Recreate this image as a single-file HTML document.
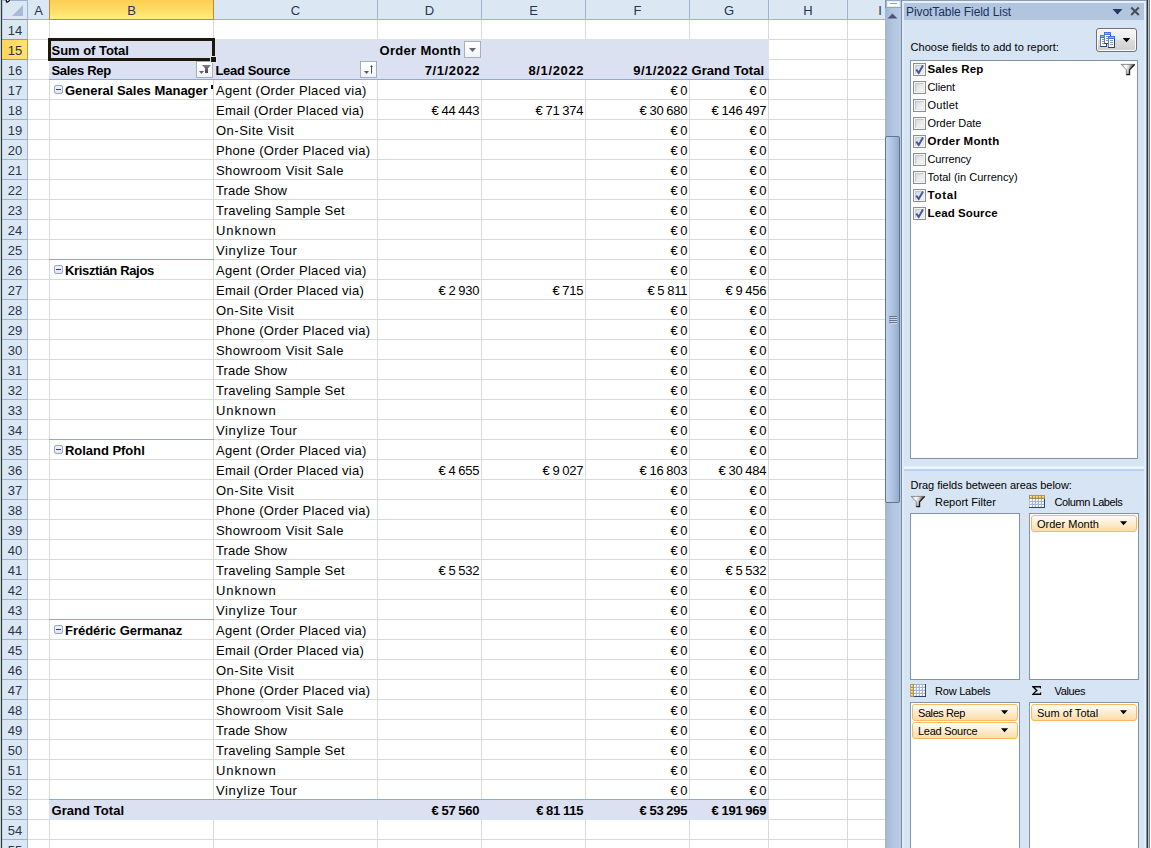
<!DOCTYPE html>
<html><head><meta charset="utf-8"><title>PivotTable</title>
<style>
html,body{margin:0;padding:0}
body{width:1151px;height:848px;position:relative;overflow:hidden;background:#fff;font-family:"Liberation Sans",sans-serif}
div,svg,span{box-sizing:border-box}
.a{position:absolute}
.t{position:absolute;white-space:pre;overflow:visible;height:20px;line-height:20px;color:#000}
.c{font-size:13.0px}
.cb{font-size:13.0px;font-weight:bold}
.n{font-size:13.0px}
.nb{font-size:13.0px;font-weight:bold}
.h{font-size:13.0px;color:#27364e}
.p{font-size:11px;height:14px;line-height:14px}
.pb{font-size:11.5px;font-weight:bold;height:14px;line-height:14px}
.pt{font-size:12px;height:16px;line-height:16px;color:#17305f}
.hl{position:absolute;height:1px}
.vl{position:absolute;width:1px}
.btn{position:absolute;width:17px;height:17px;border:1px solid #a9afb9;background:linear-gradient(#ffffff,#f1f3f8)}
.col{position:absolute;width:9px;height:9px;border:1px solid #93a6cc;border-radius:2px;background:linear-gradient(#f1f1f1,#e7e7e7)}
.col i{position:absolute;left:1px;top:3px;width:5px;height:1px;background:#2e4080}
.chk{position:absolute;width:13px;height:13px;border:1px solid #8e8f8f;background:#f4f4f4}
.chk b{position:absolute;box-sizing:border-box;left:1px;top:1px;width:9px;height:9px;border:1px solid #e2e4e8;border-color:#c4c8ce #e9e9ea #e9e9ea #c4c8ce;background:linear-gradient(135deg,#d3d7dd 0%,#e6e8eb 45%,#f7f7f7 100%)}
.box{position:absolute;background:#fff;border:1px solid #8293ab}
.item{position:absolute;height:17px;border:1px solid #fab863;border-radius:3px;background:linear-gradient(#fffdf7 0%,#fef0d6 40%,#fbdda8 100%)}
</style></head><body>

<div class="hl" style="left:28px;top:39px;width:857px;background:#d8d9db"></div>
<div class="hl" style="left:28px;top:59px;width:857px;background:#d8d9db"></div>
<div class="hl" style="left:28px;top:79px;width:857px;background:#d8d9db"></div>
<div class="hl" style="left:28px;top:99px;width:857px;background:#d8d9db"></div>
<div class="hl" style="left:28px;top:119px;width:857px;background:#d8d9db"></div>
<div class="hl" style="left:28px;top:139px;width:857px;background:#d8d9db"></div>
<div class="hl" style="left:28px;top:159px;width:857px;background:#d8d9db"></div>
<div class="hl" style="left:28px;top:179px;width:857px;background:#d8d9db"></div>
<div class="hl" style="left:28px;top:199px;width:857px;background:#d8d9db"></div>
<div class="hl" style="left:28px;top:219px;width:857px;background:#d8d9db"></div>
<div class="hl" style="left:28px;top:239px;width:857px;background:#d8d9db"></div>
<div class="hl" style="left:28px;top:259px;width:857px;background:#d8d9db"></div>
<div class="hl" style="left:28px;top:279px;width:857px;background:#d8d9db"></div>
<div class="hl" style="left:28px;top:299px;width:857px;background:#d8d9db"></div>
<div class="hl" style="left:28px;top:319px;width:857px;background:#d8d9db"></div>
<div class="hl" style="left:28px;top:339px;width:857px;background:#d8d9db"></div>
<div class="hl" style="left:28px;top:359px;width:857px;background:#d8d9db"></div>
<div class="hl" style="left:28px;top:379px;width:857px;background:#d8d9db"></div>
<div class="hl" style="left:28px;top:399px;width:857px;background:#d8d9db"></div>
<div class="hl" style="left:28px;top:419px;width:857px;background:#d8d9db"></div>
<div class="hl" style="left:28px;top:439px;width:857px;background:#d8d9db"></div>
<div class="hl" style="left:28px;top:459px;width:857px;background:#d8d9db"></div>
<div class="hl" style="left:28px;top:479px;width:857px;background:#d8d9db"></div>
<div class="hl" style="left:28px;top:499px;width:857px;background:#d8d9db"></div>
<div class="hl" style="left:28px;top:519px;width:857px;background:#d8d9db"></div>
<div class="hl" style="left:28px;top:539px;width:857px;background:#d8d9db"></div>
<div class="hl" style="left:28px;top:559px;width:857px;background:#d8d9db"></div>
<div class="hl" style="left:28px;top:579px;width:857px;background:#d8d9db"></div>
<div class="hl" style="left:28px;top:599px;width:857px;background:#d8d9db"></div>
<div class="hl" style="left:28px;top:619px;width:857px;background:#d8d9db"></div>
<div class="hl" style="left:28px;top:639px;width:857px;background:#d8d9db"></div>
<div class="hl" style="left:28px;top:659px;width:857px;background:#d8d9db"></div>
<div class="hl" style="left:28px;top:679px;width:857px;background:#d8d9db"></div>
<div class="hl" style="left:28px;top:699px;width:857px;background:#d8d9db"></div>
<div class="hl" style="left:28px;top:719px;width:857px;background:#d8d9db"></div>
<div class="hl" style="left:28px;top:739px;width:857px;background:#d8d9db"></div>
<div class="hl" style="left:28px;top:759px;width:857px;background:#d8d9db"></div>
<div class="hl" style="left:28px;top:779px;width:857px;background:#d8d9db"></div>
<div class="hl" style="left:28px;top:799px;width:857px;background:#d8d9db"></div>
<div class="hl" style="left:28px;top:819px;width:857px;background:#d8d9db"></div>
<div class="hl" style="left:28px;top:839px;width:857px;background:#d8d9db"></div>
<div class="vl" style="left:49px;top:20px;height:828px;background:#d8d9db"></div>
<div class="vl" style="left:213px;top:20px;height:828px;background:#d8d9db"></div>
<div class="vl" style="left:377px;top:20px;height:828px;background:#d8d9db"></div>
<div class="vl" style="left:481px;top:20px;height:828px;background:#d8d9db"></div>
<div class="vl" style="left:585px;top:20px;height:828px;background:#d8d9db"></div>
<div class="vl" style="left:689px;top:20px;height:828px;background:#d8d9db"></div>
<div class="vl" style="left:768px;top:20px;height:828px;background:#d8d9db"></div>
<div class="vl" style="left:847px;top:20px;height:828px;background:#d8d9db"></div>
<div class="a" style="left:49px;top:39px;width:720px;height:40px;background:#dce1f1"></div>
<div class="hl" style="left:49px;top:79px;width:720px;background:#8daadc"></div>
<div class="a" style="left:49px;top:800px;width:720px;height:20px;background:#dce1f1"></div>
<div class="hl" style="left:49px;top:799px;width:720px;background:#8daadc"></div>
<div class="hl" style="left:49px;top:259px;width:165px;background:#8daadc"></div>
<div class="hl" style="left:49px;top:439px;width:165px;background:#8daadc"></div>
<div class="hl" style="left:49px;top:619px;width:165px;background:#8daadc"></div>
<div class="a" style="left:2px;top:0;width:883px;height:20px;background:#dce7f4;border-bottom:1px solid #9fb3d1"></div>
<div class="a" style="left:2px;top:0;width:26px;height:20px;border-top:1px solid #9db0cf;border-right:1px solid #9fb3d1;border-left:1px solid #b4c8e4;border-bottom:1px solid #c8933a"></div>
<svg class="a" style="left:12px;top:5px" width="12" height="11"><path d="M11 0 L11 11 L0 11 Z" fill="#a9bad8"/></svg>
<svg class="a" style="left:4px;top:0" width="8" height="4"><path d="M1.6 0 L2 2.2 Q2.6 3.2 4 2.6 L5.6 1.2 L6 0 Z" fill="#0b0b1a"/><path d="M3 0 L3.2 1.4 L4.6 0.4 L4.8 0 Z" fill="#fff"/></svg>
<div class="vl" style="left:27px;top:0;height:19px;background:#9fb3d1"></div>
<div class="vl" style="left:377px;top:0;height:19px;background:#9fb3d1"></div>
<div class="vl" style="left:481px;top:0;height:19px;background:#9fb3d1"></div>
<div class="vl" style="left:585px;top:0;height:19px;background:#9fb3d1"></div>
<div class="vl" style="left:689px;top:0;height:19px;background:#9fb3d1"></div>
<div class="vl" style="left:768px;top:0;height:19px;background:#9fb3d1"></div>
<div class="vl" style="left:847px;top:0;height:19px;background:#9fb3d1"></div>
<div class="a" style="left:49px;top:0;width:165px;height:20px;background:linear-gradient(#fcce54 0%,#fedb66 50%,#fff07c 100%);border:1px solid #c18b2d;border-top:none"></div>
<div class="t h" style="left:28px;top:1px;width:21px;text-align:center;"><span id="t1" style="">A</span></div>
<div class="t h" style="left:50px;top:1px;width:163px;text-align:center;"><span id="t2" style="">B</span></div>
<div class="t h" style="left:214px;top:1px;width:163px;text-align:center;"><span id="t3" style="">C</span></div>
<div class="t h" style="left:378px;top:1px;width:103px;text-align:center;"><span id="t4" style="">D</span></div>
<div class="t h" style="left:482px;top:1px;width:103px;text-align:center;"><span id="t5" style="">E</span></div>
<div class="t h" style="left:586px;top:1px;width:103px;text-align:center;"><span id="t6" style="">F</span></div>
<div class="t h" style="left:690px;top:1px;width:78px;text-align:center;"><span id="t7" style="">G</span></div>
<div class="t h" style="left:769px;top:1px;width:78px;text-align:center;"><span id="t8" style="">H</span></div>
<div class="t h" style="left:876px;top:1px;width:8px;text-align:center;"><span id="t9" style="">I</span></div>
<div class="a" style="left:2px;top:20px;width:26px;height:828px;background:#dce7f4;border-right:1px solid #9fb3d1;border-left:1px solid #c3d4ea"></div>
<div class="hl" style="left:2px;top:39px;width:26px;background:#9fb3d1"></div>
<div class="hl" style="left:2px;top:59px;width:26px;background:#9fb3d1"></div>
<div class="hl" style="left:2px;top:79px;width:26px;background:#9fb3d1"></div>
<div class="hl" style="left:2px;top:99px;width:26px;background:#9fb3d1"></div>
<div class="hl" style="left:2px;top:119px;width:26px;background:#9fb3d1"></div>
<div class="hl" style="left:2px;top:139px;width:26px;background:#9fb3d1"></div>
<div class="hl" style="left:2px;top:159px;width:26px;background:#9fb3d1"></div>
<div class="hl" style="left:2px;top:179px;width:26px;background:#9fb3d1"></div>
<div class="hl" style="left:2px;top:199px;width:26px;background:#9fb3d1"></div>
<div class="hl" style="left:2px;top:219px;width:26px;background:#9fb3d1"></div>
<div class="hl" style="left:2px;top:239px;width:26px;background:#9fb3d1"></div>
<div class="hl" style="left:2px;top:259px;width:26px;background:#9fb3d1"></div>
<div class="hl" style="left:2px;top:279px;width:26px;background:#9fb3d1"></div>
<div class="hl" style="left:2px;top:299px;width:26px;background:#9fb3d1"></div>
<div class="hl" style="left:2px;top:319px;width:26px;background:#9fb3d1"></div>
<div class="hl" style="left:2px;top:339px;width:26px;background:#9fb3d1"></div>
<div class="hl" style="left:2px;top:359px;width:26px;background:#9fb3d1"></div>
<div class="hl" style="left:2px;top:379px;width:26px;background:#9fb3d1"></div>
<div class="hl" style="left:2px;top:399px;width:26px;background:#9fb3d1"></div>
<div class="hl" style="left:2px;top:419px;width:26px;background:#9fb3d1"></div>
<div class="hl" style="left:2px;top:439px;width:26px;background:#9fb3d1"></div>
<div class="hl" style="left:2px;top:459px;width:26px;background:#9fb3d1"></div>
<div class="hl" style="left:2px;top:479px;width:26px;background:#9fb3d1"></div>
<div class="hl" style="left:2px;top:499px;width:26px;background:#9fb3d1"></div>
<div class="hl" style="left:2px;top:519px;width:26px;background:#9fb3d1"></div>
<div class="hl" style="left:2px;top:539px;width:26px;background:#9fb3d1"></div>
<div class="hl" style="left:2px;top:559px;width:26px;background:#9fb3d1"></div>
<div class="hl" style="left:2px;top:579px;width:26px;background:#9fb3d1"></div>
<div class="hl" style="left:2px;top:599px;width:26px;background:#9fb3d1"></div>
<div class="hl" style="left:2px;top:619px;width:26px;background:#9fb3d1"></div>
<div class="hl" style="left:2px;top:639px;width:26px;background:#9fb3d1"></div>
<div class="hl" style="left:2px;top:659px;width:26px;background:#9fb3d1"></div>
<div class="hl" style="left:2px;top:679px;width:26px;background:#9fb3d1"></div>
<div class="hl" style="left:2px;top:699px;width:26px;background:#9fb3d1"></div>
<div class="hl" style="left:2px;top:719px;width:26px;background:#9fb3d1"></div>
<div class="hl" style="left:2px;top:739px;width:26px;background:#9fb3d1"></div>
<div class="hl" style="left:2px;top:759px;width:26px;background:#9fb3d1"></div>
<div class="hl" style="left:2px;top:779px;width:26px;background:#9fb3d1"></div>
<div class="hl" style="left:2px;top:799px;width:26px;background:#9fb3d1"></div>
<div class="hl" style="left:2px;top:819px;width:26px;background:#9fb3d1"></div>
<div class="hl" style="left:2px;top:839px;width:26px;background:#9fb3d1"></div>
<div class="hl" style="left:2px;top:859px;width:26px;background:#9fb3d1"></div>
<div class="a" style="left:2px;top:39px;width:26px;height:21px;background:linear-gradient(90deg,#fdd45c,#ffe372);border-top:1px solid #c8933a;border-bottom:1px solid #c8933a;border-right:1px solid #c8933a"></div>
<div class="t h" style="left:2px;top:21px;width:26px;text-align:center;"><span id="t10" style="">14</span></div>
<div class="t h" style="left:2px;top:41px;width:26px;text-align:center;"><span id="t11" style="">15</span></div>
<div class="t h" style="left:2px;top:61px;width:26px;text-align:center;"><span id="t12" style="">16</span></div>
<div class="t h" style="left:2px;top:81px;width:26px;text-align:center;"><span id="t13" style="">17</span></div>
<div class="t h" style="left:2px;top:101px;width:26px;text-align:center;"><span id="t14" style="">18</span></div>
<div class="t h" style="left:2px;top:121px;width:26px;text-align:center;"><span id="t15" style="">19</span></div>
<div class="t h" style="left:2px;top:141px;width:26px;text-align:center;"><span id="t16" style="">20</span></div>
<div class="t h" style="left:2px;top:161px;width:26px;text-align:center;"><span id="t17" style="">21</span></div>
<div class="t h" style="left:2px;top:181px;width:26px;text-align:center;"><span id="t18" style="">22</span></div>
<div class="t h" style="left:2px;top:201px;width:26px;text-align:center;"><span id="t19" style="">23</span></div>
<div class="t h" style="left:2px;top:221px;width:26px;text-align:center;"><span id="t20" style="">24</span></div>
<div class="t h" style="left:2px;top:241px;width:26px;text-align:center;"><span id="t21" style="">25</span></div>
<div class="t h" style="left:2px;top:261px;width:26px;text-align:center;"><span id="t22" style="">26</span></div>
<div class="t h" style="left:2px;top:281px;width:26px;text-align:center;"><span id="t23" style="">27</span></div>
<div class="t h" style="left:2px;top:301px;width:26px;text-align:center;"><span id="t24" style="">28</span></div>
<div class="t h" style="left:2px;top:321px;width:26px;text-align:center;"><span id="t25" style="">29</span></div>
<div class="t h" style="left:2px;top:341px;width:26px;text-align:center;"><span id="t26" style="">30</span></div>
<div class="t h" style="left:2px;top:361px;width:26px;text-align:center;"><span id="t27" style="">31</span></div>
<div class="t h" style="left:2px;top:381px;width:26px;text-align:center;"><span id="t28" style="">32</span></div>
<div class="t h" style="left:2px;top:401px;width:26px;text-align:center;"><span id="t29" style="">33</span></div>
<div class="t h" style="left:2px;top:421px;width:26px;text-align:center;"><span id="t30" style="">34</span></div>
<div class="t h" style="left:2px;top:441px;width:26px;text-align:center;"><span id="t31" style="">35</span></div>
<div class="t h" style="left:2px;top:461px;width:26px;text-align:center;"><span id="t32" style="">36</span></div>
<div class="t h" style="left:2px;top:481px;width:26px;text-align:center;"><span id="t33" style="">37</span></div>
<div class="t h" style="left:2px;top:501px;width:26px;text-align:center;"><span id="t34" style="">38</span></div>
<div class="t h" style="left:2px;top:521px;width:26px;text-align:center;"><span id="t35" style="">39</span></div>
<div class="t h" style="left:2px;top:541px;width:26px;text-align:center;"><span id="t36" style="">40</span></div>
<div class="t h" style="left:2px;top:561px;width:26px;text-align:center;"><span id="t37" style="">41</span></div>
<div class="t h" style="left:2px;top:581px;width:26px;text-align:center;"><span id="t38" style="">42</span></div>
<div class="t h" style="left:2px;top:601px;width:26px;text-align:center;"><span id="t39" style="">43</span></div>
<div class="t h" style="left:2px;top:621px;width:26px;text-align:center;"><span id="t40" style="">44</span></div>
<div class="t h" style="left:2px;top:641px;width:26px;text-align:center;"><span id="t41" style="">45</span></div>
<div class="t h" style="left:2px;top:661px;width:26px;text-align:center;"><span id="t42" style="">46</span></div>
<div class="t h" style="left:2px;top:681px;width:26px;text-align:center;"><span id="t43" style="">47</span></div>
<div class="t h" style="left:2px;top:701px;width:26px;text-align:center;"><span id="t44" style="">48</span></div>
<div class="t h" style="left:2px;top:721px;width:26px;text-align:center;"><span id="t45" style="">49</span></div>
<div class="t h" style="left:2px;top:741px;width:26px;text-align:center;"><span id="t46" style="">50</span></div>
<div class="t h" style="left:2px;top:761px;width:26px;text-align:center;"><span id="t47" style="">51</span></div>
<div class="t h" style="left:2px;top:781px;width:26px;text-align:center;"><span id="t48" style="">52</span></div>
<div class="t h" style="left:2px;top:801px;width:26px;text-align:center;"><span id="t49" style="">53</span></div>
<div class="t h" style="left:2px;top:821px;width:26px;text-align:center;"><span id="t50" style="">54</span></div>
<div class="t h" style="left:2px;top:841px;width:26px;text-align:center;"><span id="t51" style="">55</span></div>
<div class="vl" style="left:0;top:0;height:848px;background:#c6d0ce"></div>
<div class="vl" style="left:1px;top:0;height:848px;background:#2f3a3a"></div>
<div class="t cb" style="left:51.5px;top:41px;width:160px;"><span id="t52" style="letter-spacing:-0.030px;">Sum of Total</span></div>
<div class="t cb" style="left:379.5px;top:41px;width:100px;"><span id="t53" style="letter-spacing:0.311px;">Order Month</span></div>
<div class="t cb" style="left:51.5px;top:61px;width:140px;"><span id="t54" style="letter-spacing:-0.314px;">Sales Rep</span></div>
<div class="t cb" style="left:215.5px;top:61px;width:140px;"><span id="t55" style="letter-spacing:-0.338px;">Lead Source</span></div>
<div class="t cb" style="left:379.5px;top:61px;width:100px;text-align:right;"><span id="t56" style="letter-spacing:0.598px;margin-right:-0.598px;">7/1/2022</span></div>
<div class="t cb" style="left:483.5px;top:61px;width:100px;text-align:right;"><span id="t57" style="letter-spacing:0.623px;margin-right:-0.623px;">8/1/2022</span></div>
<div class="t cb" style="left:587.5px;top:61px;width:100px;text-align:right;"><span id="t58" style="letter-spacing:0.529px;margin-right:-0.529px;">9/1/2022</span></div>
<div class="t cb" style="left:691.5px;top:61px;width:78px;"><span id="t59" style="letter-spacing:0.066px;">Grand Total</span></div>
<div class="col" style="left:54px;top:85px"><i></i></div>
<div class="t cb" style="left:65px;top:81px;width:148px;overflow:hidden;"><span id="t60" style="letter-spacing:-0.012px;">General Sales Manager</span></div>
<div class="t c" style="left:216px;top:81px;width:160px;"><span id="t61" style="letter-spacing:0.318px;">Agent (Order Placed via)</span></div>
<div class="t n" style="left:587.5px;top:81px;width:100px;text-align:right;"><span id="t62" style="letter-spacing:-0.230px;word-spacing:-0.500px;margin-right:0.230px;">€ 0</span></div>
<div class="t n" style="left:666.5px;top:81px;width:100px;text-align:right;"><span id="t63" style="letter-spacing:-0.230px;word-spacing:-0.500px;margin-right:0.230px;">€ 0</span></div>
<div class="t c" style="left:216px;top:101px;width:160px;"><span id="t64" style="letter-spacing:0.272px;">Email (Order Placed via)</span></div>
<div class="t n" style="left:379.5px;top:101px;width:100px;text-align:right;"><span id="t65" style="letter-spacing:-0.230px;word-spacing:-0.500px;margin-right:0.230px;">€ 44 443</span></div>
<div class="t n" style="left:483.5px;top:101px;width:100px;text-align:right;"><span id="t66" style="letter-spacing:-0.230px;word-spacing:-0.500px;margin-right:0.230px;">€ 71 374</span></div>
<div class="t n" style="left:587.5px;top:101px;width:100px;text-align:right;"><span id="t67" style="letter-spacing:-0.230px;word-spacing:-0.500px;margin-right:0.230px;">€ 30 680</span></div>
<div class="t n" style="left:666.5px;top:101px;width:100px;text-align:right;"><span id="t68" style="letter-spacing:-0.230px;word-spacing:-0.500px;margin-right:0.230px;">€ 146 497</span></div>
<div class="t c" style="left:216px;top:121px;width:160px;"><span id="t69" style="letter-spacing:0.497px;">On-Site Visit</span></div>
<div class="t n" style="left:587.5px;top:121px;width:100px;text-align:right;"><span id="t70" style="letter-spacing:-0.230px;word-spacing:-0.500px;margin-right:0.230px;">€ 0</span></div>
<div class="t n" style="left:666.5px;top:121px;width:100px;text-align:right;"><span id="t71" style="letter-spacing:-0.230px;word-spacing:-0.500px;margin-right:0.230px;">€ 0</span></div>
<div class="t c" style="left:216px;top:141px;width:160px;"><span id="t72" style="letter-spacing:0.325px;">Phone (Order Placed via)</span></div>
<div class="t n" style="left:587.5px;top:141px;width:100px;text-align:right;"><span id="t73" style="letter-spacing:-0.230px;word-spacing:-0.500px;margin-right:0.230px;">€ 0</span></div>
<div class="t n" style="left:666.5px;top:141px;width:100px;text-align:right;"><span id="t74" style="letter-spacing:-0.230px;word-spacing:-0.500px;margin-right:0.230px;">€ 0</span></div>
<div class="t c" style="left:216px;top:161px;width:160px;"><span id="t75" style="letter-spacing:0.432px;">Showroom Visit Sale</span></div>
<div class="t n" style="left:587.5px;top:161px;width:100px;text-align:right;"><span id="t76" style="letter-spacing:-0.230px;word-spacing:-0.500px;margin-right:0.230px;">€ 0</span></div>
<div class="t n" style="left:666.5px;top:161px;width:100px;text-align:right;"><span id="t77" style="letter-spacing:-0.230px;word-spacing:-0.500px;margin-right:0.230px;">€ 0</span></div>
<div class="t c" style="left:216px;top:181px;width:160px;"><span id="t78" style="letter-spacing:0.147px;">Trade Show</span></div>
<div class="t n" style="left:587.5px;top:181px;width:100px;text-align:right;"><span id="t79" style="letter-spacing:-0.230px;word-spacing:-0.500px;margin-right:0.230px;">€ 0</span></div>
<div class="t n" style="left:666.5px;top:181px;width:100px;text-align:right;"><span id="t80" style="letter-spacing:-0.230px;word-spacing:-0.500px;margin-right:0.230px;">€ 0</span></div>
<div class="t c" style="left:216px;top:201px;width:160px;"><span id="t81" style="letter-spacing:0.247px;">Traveling Sample Set</span></div>
<div class="t n" style="left:587.5px;top:201px;width:100px;text-align:right;"><span id="t82" style="letter-spacing:-0.230px;word-spacing:-0.500px;margin-right:0.230px;">€ 0</span></div>
<div class="t n" style="left:666.5px;top:201px;width:100px;text-align:right;"><span id="t83" style="letter-spacing:-0.230px;word-spacing:-0.500px;margin-right:0.230px;">€ 0</span></div>
<div class="t c" style="left:216px;top:221px;width:160px;"><span id="t84" style="letter-spacing:0.932px;">Unknown</span></div>
<div class="t n" style="left:587.5px;top:221px;width:100px;text-align:right;"><span id="t85" style="letter-spacing:-0.230px;word-spacing:-0.500px;margin-right:0.230px;">€ 0</span></div>
<div class="t n" style="left:666.5px;top:221px;width:100px;text-align:right;"><span id="t86" style="letter-spacing:-0.230px;word-spacing:-0.500px;margin-right:0.230px;">€ 0</span></div>
<div class="t c" style="left:216px;top:241px;width:160px;"><span id="t87" style="letter-spacing:0.638px;">Vinylize Tour</span></div>
<div class="t n" style="left:587.5px;top:241px;width:100px;text-align:right;"><span id="t88" style="letter-spacing:-0.230px;word-spacing:-0.500px;margin-right:0.230px;">€ 0</span></div>
<div class="t n" style="left:666.5px;top:241px;width:100px;text-align:right;"><span id="t89" style="letter-spacing:-0.230px;word-spacing:-0.500px;margin-right:0.230px;">€ 0</span></div>
<div class="col" style="left:54px;top:265px"><i></i></div>
<div class="t cb" style="left:65px;top:261px;width:148px;overflow:hidden;"><span id="t90" style="letter-spacing:-0.334px;">Krisztián Rajos</span></div>
<div class="t c" style="left:216px;top:261px;width:160px;"><span id="t91" style="letter-spacing:0.318px;">Agent (Order Placed via)</span></div>
<div class="t n" style="left:587.5px;top:261px;width:100px;text-align:right;"><span id="t92" style="letter-spacing:-0.230px;word-spacing:-0.500px;margin-right:0.230px;">€ 0</span></div>
<div class="t n" style="left:666.5px;top:261px;width:100px;text-align:right;"><span id="t93" style="letter-spacing:-0.230px;word-spacing:-0.500px;margin-right:0.230px;">€ 0</span></div>
<div class="t c" style="left:216px;top:281px;width:160px;"><span id="t94" style="letter-spacing:0.272px;">Email (Order Placed via)</span></div>
<div class="t n" style="left:379.5px;top:281px;width:100px;text-align:right;"><span id="t95" style="letter-spacing:-0.230px;word-spacing:-0.500px;margin-right:0.230px;">€ 2 930</span></div>
<div class="t n" style="left:483.5px;top:281px;width:100px;text-align:right;"><span id="t96" style="letter-spacing:-0.230px;word-spacing:-0.500px;margin-right:0.230px;">€ 715</span></div>
<div class="t n" style="left:587.5px;top:281px;width:100px;text-align:right;"><span id="t97" style="letter-spacing:-0.230px;word-spacing:-0.500px;margin-right:0.230px;">€ 5 811</span></div>
<div class="t n" style="left:666.5px;top:281px;width:100px;text-align:right;"><span id="t98" style="letter-spacing:-0.230px;word-spacing:-0.500px;margin-right:0.230px;">€ 9 456</span></div>
<div class="t c" style="left:216px;top:301px;width:160px;"><span id="t99" style="letter-spacing:0.497px;">On-Site Visit</span></div>
<div class="t n" style="left:587.5px;top:301px;width:100px;text-align:right;"><span id="t100" style="letter-spacing:-0.230px;word-spacing:-0.500px;margin-right:0.230px;">€ 0</span></div>
<div class="t n" style="left:666.5px;top:301px;width:100px;text-align:right;"><span id="t101" style="letter-spacing:-0.230px;word-spacing:-0.500px;margin-right:0.230px;">€ 0</span></div>
<div class="t c" style="left:216px;top:321px;width:160px;"><span id="t102" style="letter-spacing:0.325px;">Phone (Order Placed via)</span></div>
<div class="t n" style="left:587.5px;top:321px;width:100px;text-align:right;"><span id="t103" style="letter-spacing:-0.230px;word-spacing:-0.500px;margin-right:0.230px;">€ 0</span></div>
<div class="t n" style="left:666.5px;top:321px;width:100px;text-align:right;"><span id="t104" style="letter-spacing:-0.230px;word-spacing:-0.500px;margin-right:0.230px;">€ 0</span></div>
<div class="t c" style="left:216px;top:341px;width:160px;"><span id="t105" style="letter-spacing:0.432px;">Showroom Visit Sale</span></div>
<div class="t n" style="left:587.5px;top:341px;width:100px;text-align:right;"><span id="t106" style="letter-spacing:-0.230px;word-spacing:-0.500px;margin-right:0.230px;">€ 0</span></div>
<div class="t n" style="left:666.5px;top:341px;width:100px;text-align:right;"><span id="t107" style="letter-spacing:-0.230px;word-spacing:-0.500px;margin-right:0.230px;">€ 0</span></div>
<div class="t c" style="left:216px;top:361px;width:160px;"><span id="t108" style="letter-spacing:0.147px;">Trade Show</span></div>
<div class="t n" style="left:587.5px;top:361px;width:100px;text-align:right;"><span id="t109" style="letter-spacing:-0.230px;word-spacing:-0.500px;margin-right:0.230px;">€ 0</span></div>
<div class="t n" style="left:666.5px;top:361px;width:100px;text-align:right;"><span id="t110" style="letter-spacing:-0.230px;word-spacing:-0.500px;margin-right:0.230px;">€ 0</span></div>
<div class="t c" style="left:216px;top:381px;width:160px;"><span id="t111" style="letter-spacing:0.247px;">Traveling Sample Set</span></div>
<div class="t n" style="left:587.5px;top:381px;width:100px;text-align:right;"><span id="t112" style="letter-spacing:-0.230px;word-spacing:-0.500px;margin-right:0.230px;">€ 0</span></div>
<div class="t n" style="left:666.5px;top:381px;width:100px;text-align:right;"><span id="t113" style="letter-spacing:-0.230px;word-spacing:-0.500px;margin-right:0.230px;">€ 0</span></div>
<div class="t c" style="left:216px;top:401px;width:160px;"><span id="t114" style="letter-spacing:0.932px;">Unknown</span></div>
<div class="t n" style="left:587.5px;top:401px;width:100px;text-align:right;"><span id="t115" style="letter-spacing:-0.230px;word-spacing:-0.500px;margin-right:0.230px;">€ 0</span></div>
<div class="t n" style="left:666.5px;top:401px;width:100px;text-align:right;"><span id="t116" style="letter-spacing:-0.230px;word-spacing:-0.500px;margin-right:0.230px;">€ 0</span></div>
<div class="t c" style="left:216px;top:421px;width:160px;"><span id="t117" style="letter-spacing:0.638px;">Vinylize Tour</span></div>
<div class="t n" style="left:587.5px;top:421px;width:100px;text-align:right;"><span id="t118" style="letter-spacing:-0.230px;word-spacing:-0.500px;margin-right:0.230px;">€ 0</span></div>
<div class="t n" style="left:666.5px;top:421px;width:100px;text-align:right;"><span id="t119" style="letter-spacing:-0.230px;word-spacing:-0.500px;margin-right:0.230px;">€ 0</span></div>
<div class="col" style="left:54px;top:445px"><i></i></div>
<div class="t cb" style="left:65px;top:441px;width:148px;overflow:hidden;"><span id="t120" style="letter-spacing:-0.035px;">Roland Pfohl</span></div>
<div class="t c" style="left:216px;top:441px;width:160px;"><span id="t121" style="letter-spacing:0.318px;">Agent (Order Placed via)</span></div>
<div class="t n" style="left:587.5px;top:441px;width:100px;text-align:right;"><span id="t122" style="letter-spacing:-0.230px;word-spacing:-0.500px;margin-right:0.230px;">€ 0</span></div>
<div class="t n" style="left:666.5px;top:441px;width:100px;text-align:right;"><span id="t123" style="letter-spacing:-0.230px;word-spacing:-0.500px;margin-right:0.230px;">€ 0</span></div>
<div class="t c" style="left:216px;top:461px;width:160px;"><span id="t124" style="letter-spacing:0.272px;">Email (Order Placed via)</span></div>
<div class="t n" style="left:379.5px;top:461px;width:100px;text-align:right;"><span id="t125" style="letter-spacing:-0.230px;word-spacing:-0.500px;margin-right:0.230px;">€ 4 655</span></div>
<div class="t n" style="left:483.5px;top:461px;width:100px;text-align:right;"><span id="t126" style="letter-spacing:-0.230px;word-spacing:-0.500px;margin-right:0.230px;">€ 9 027</span></div>
<div class="t n" style="left:587.5px;top:461px;width:100px;text-align:right;"><span id="t127" style="letter-spacing:-0.230px;word-spacing:-0.500px;margin-right:0.230px;">€ 16 803</span></div>
<div class="t n" style="left:666.5px;top:461px;width:100px;text-align:right;"><span id="t128" style="letter-spacing:-0.230px;word-spacing:-0.500px;margin-right:0.230px;">€ 30 484</span></div>
<div class="t c" style="left:216px;top:481px;width:160px;"><span id="t129" style="letter-spacing:0.497px;">On-Site Visit</span></div>
<div class="t n" style="left:587.5px;top:481px;width:100px;text-align:right;"><span id="t130" style="letter-spacing:-0.230px;word-spacing:-0.500px;margin-right:0.230px;">€ 0</span></div>
<div class="t n" style="left:666.5px;top:481px;width:100px;text-align:right;"><span id="t131" style="letter-spacing:-0.230px;word-spacing:-0.500px;margin-right:0.230px;">€ 0</span></div>
<div class="t c" style="left:216px;top:501px;width:160px;"><span id="t132" style="letter-spacing:0.325px;">Phone (Order Placed via)</span></div>
<div class="t n" style="left:587.5px;top:501px;width:100px;text-align:right;"><span id="t133" style="letter-spacing:-0.230px;word-spacing:-0.500px;margin-right:0.230px;">€ 0</span></div>
<div class="t n" style="left:666.5px;top:501px;width:100px;text-align:right;"><span id="t134" style="letter-spacing:-0.230px;word-spacing:-0.500px;margin-right:0.230px;">€ 0</span></div>
<div class="t c" style="left:216px;top:521px;width:160px;"><span id="t135" style="letter-spacing:0.432px;">Showroom Visit Sale</span></div>
<div class="t n" style="left:587.5px;top:521px;width:100px;text-align:right;"><span id="t136" style="letter-spacing:-0.230px;word-spacing:-0.500px;margin-right:0.230px;">€ 0</span></div>
<div class="t n" style="left:666.5px;top:521px;width:100px;text-align:right;"><span id="t137" style="letter-spacing:-0.230px;word-spacing:-0.500px;margin-right:0.230px;">€ 0</span></div>
<div class="t c" style="left:216px;top:541px;width:160px;"><span id="t138" style="letter-spacing:0.147px;">Trade Show</span></div>
<div class="t n" style="left:587.5px;top:541px;width:100px;text-align:right;"><span id="t139" style="letter-spacing:-0.230px;word-spacing:-0.500px;margin-right:0.230px;">€ 0</span></div>
<div class="t n" style="left:666.5px;top:541px;width:100px;text-align:right;"><span id="t140" style="letter-spacing:-0.230px;word-spacing:-0.500px;margin-right:0.230px;">€ 0</span></div>
<div class="t c" style="left:216px;top:561px;width:160px;"><span id="t141" style="letter-spacing:0.247px;">Traveling Sample Set</span></div>
<div class="t n" style="left:379.5px;top:561px;width:100px;text-align:right;"><span id="t142" style="letter-spacing:-0.230px;word-spacing:-0.500px;margin-right:0.230px;">€ 5 532</span></div>
<div class="t n" style="left:587.5px;top:561px;width:100px;text-align:right;"><span id="t143" style="letter-spacing:-0.230px;word-spacing:-0.500px;margin-right:0.230px;">€ 0</span></div>
<div class="t n" style="left:666.5px;top:561px;width:100px;text-align:right;"><span id="t144" style="letter-spacing:-0.230px;word-spacing:-0.500px;margin-right:0.230px;">€ 5 532</span></div>
<div class="t c" style="left:216px;top:581px;width:160px;"><span id="t145" style="letter-spacing:0.932px;">Unknown</span></div>
<div class="t n" style="left:587.5px;top:581px;width:100px;text-align:right;"><span id="t146" style="letter-spacing:-0.230px;word-spacing:-0.500px;margin-right:0.230px;">€ 0</span></div>
<div class="t n" style="left:666.5px;top:581px;width:100px;text-align:right;"><span id="t147" style="letter-spacing:-0.230px;word-spacing:-0.500px;margin-right:0.230px;">€ 0</span></div>
<div class="t c" style="left:216px;top:601px;width:160px;"><span id="t148" style="letter-spacing:0.638px;">Vinylize Tour</span></div>
<div class="t n" style="left:587.5px;top:601px;width:100px;text-align:right;"><span id="t149" style="letter-spacing:-0.230px;word-spacing:-0.500px;margin-right:0.230px;">€ 0</span></div>
<div class="t n" style="left:666.5px;top:601px;width:100px;text-align:right;"><span id="t150" style="letter-spacing:-0.230px;word-spacing:-0.500px;margin-right:0.230px;">€ 0</span></div>
<div class="col" style="left:54px;top:625px"><i></i></div>
<div class="t cb" style="left:65px;top:621px;width:148px;overflow:hidden;"><span id="t151" style="letter-spacing:-0.031px;">Frédéric Germanaz</span></div>
<div class="t c" style="left:216px;top:621px;width:160px;"><span id="t152" style="letter-spacing:0.318px;">Agent (Order Placed via)</span></div>
<div class="t n" style="left:587.5px;top:621px;width:100px;text-align:right;"><span id="t153" style="letter-spacing:-0.230px;word-spacing:-0.500px;margin-right:0.230px;">€ 0</span></div>
<div class="t n" style="left:666.5px;top:621px;width:100px;text-align:right;"><span id="t154" style="letter-spacing:-0.230px;word-spacing:-0.500px;margin-right:0.230px;">€ 0</span></div>
<div class="t c" style="left:216px;top:641px;width:160px;"><span id="t155" style="letter-spacing:0.272px;">Email (Order Placed via)</span></div>
<div class="t n" style="left:587.5px;top:641px;width:100px;text-align:right;"><span id="t156" style="letter-spacing:-0.230px;word-spacing:-0.500px;margin-right:0.230px;">€ 0</span></div>
<div class="t n" style="left:666.5px;top:641px;width:100px;text-align:right;"><span id="t157" style="letter-spacing:-0.230px;word-spacing:-0.500px;margin-right:0.230px;">€ 0</span></div>
<div class="t c" style="left:216px;top:661px;width:160px;"><span id="t158" style="letter-spacing:0.497px;">On-Site Visit</span></div>
<div class="t n" style="left:587.5px;top:661px;width:100px;text-align:right;"><span id="t159" style="letter-spacing:-0.230px;word-spacing:-0.500px;margin-right:0.230px;">€ 0</span></div>
<div class="t n" style="left:666.5px;top:661px;width:100px;text-align:right;"><span id="t160" style="letter-spacing:-0.230px;word-spacing:-0.500px;margin-right:0.230px;">€ 0</span></div>
<div class="t c" style="left:216px;top:681px;width:160px;"><span id="t161" style="letter-spacing:0.325px;">Phone (Order Placed via)</span></div>
<div class="t n" style="left:587.5px;top:681px;width:100px;text-align:right;"><span id="t162" style="letter-spacing:-0.230px;word-spacing:-0.500px;margin-right:0.230px;">€ 0</span></div>
<div class="t n" style="left:666.5px;top:681px;width:100px;text-align:right;"><span id="t163" style="letter-spacing:-0.230px;word-spacing:-0.500px;margin-right:0.230px;">€ 0</span></div>
<div class="t c" style="left:216px;top:701px;width:160px;"><span id="t164" style="letter-spacing:0.432px;">Showroom Visit Sale</span></div>
<div class="t n" style="left:587.5px;top:701px;width:100px;text-align:right;"><span id="t165" style="letter-spacing:-0.230px;word-spacing:-0.500px;margin-right:0.230px;">€ 0</span></div>
<div class="t n" style="left:666.5px;top:701px;width:100px;text-align:right;"><span id="t166" style="letter-spacing:-0.230px;word-spacing:-0.500px;margin-right:0.230px;">€ 0</span></div>
<div class="t c" style="left:216px;top:721px;width:160px;"><span id="t167" style="letter-spacing:0.147px;">Trade Show</span></div>
<div class="t n" style="left:587.5px;top:721px;width:100px;text-align:right;"><span id="t168" style="letter-spacing:-0.230px;word-spacing:-0.500px;margin-right:0.230px;">€ 0</span></div>
<div class="t n" style="left:666.5px;top:721px;width:100px;text-align:right;"><span id="t169" style="letter-spacing:-0.230px;word-spacing:-0.500px;margin-right:0.230px;">€ 0</span></div>
<div class="t c" style="left:216px;top:741px;width:160px;"><span id="t170" style="letter-spacing:0.247px;">Traveling Sample Set</span></div>
<div class="t n" style="left:587.5px;top:741px;width:100px;text-align:right;"><span id="t171" style="letter-spacing:-0.230px;word-spacing:-0.500px;margin-right:0.230px;">€ 0</span></div>
<div class="t n" style="left:666.5px;top:741px;width:100px;text-align:right;"><span id="t172" style="letter-spacing:-0.230px;word-spacing:-0.500px;margin-right:0.230px;">€ 0</span></div>
<div class="t c" style="left:216px;top:761px;width:160px;"><span id="t173" style="letter-spacing:0.932px;">Unknown</span></div>
<div class="t n" style="left:587.5px;top:761px;width:100px;text-align:right;"><span id="t174" style="letter-spacing:-0.230px;word-spacing:-0.500px;margin-right:0.230px;">€ 0</span></div>
<div class="t n" style="left:666.5px;top:761px;width:100px;text-align:right;"><span id="t175" style="letter-spacing:-0.230px;word-spacing:-0.500px;margin-right:0.230px;">€ 0</span></div>
<div class="t c" style="left:216px;top:781px;width:160px;"><span id="t176" style="letter-spacing:0.638px;">Vinylize Tour</span></div>
<div class="t n" style="left:587.5px;top:781px;width:100px;text-align:right;"><span id="t177" style="letter-spacing:-0.230px;word-spacing:-0.500px;margin-right:0.230px;">€ 0</span></div>
<div class="t n" style="left:666.5px;top:781px;width:100px;text-align:right;"><span id="t178" style="letter-spacing:-0.230px;word-spacing:-0.500px;margin-right:0.230px;">€ 0</span></div>
<div class="a" style="left:211.4px;top:85px;width:1.6px;height:4px;background:#111"></div>
<div class="t cb" style="left:51.5px;top:801px;width:140px;"><span id="t179" style="letter-spacing:0.066px;">Grand Total</span></div>
<div class="t nb" style="left:379.5px;top:801px;width:100px;text-align:right;"><span id="t180" style="letter-spacing:-0.230px;word-spacing:-0.500px;margin-right:0.230px;">€ 57 560</span></div>
<div class="t nb" style="left:483.5px;top:801px;width:100px;text-align:right;"><span id="t181" style="letter-spacing:-0.230px;word-spacing:-0.500px;margin-right:0.230px;">€ 81 115</span></div>
<div class="t nb" style="left:587.5px;top:801px;width:100px;text-align:right;"><span id="t182" style="letter-spacing:-0.230px;word-spacing:-0.500px;margin-right:0.230px;">€ 53 295</span></div>
<div class="t nb" style="left:666.5px;top:801px;width:100px;text-align:right;"><span id="t183" style="letter-spacing:-0.230px;word-spacing:-0.500px;margin-right:0.230px;">€ 191 969</span></div>
<div class="btn" style="left:196px;top:61px"><svg width="15" height="15" style="position:absolute;left:0;top:0"><defs><linearGradient id="fg" x1="0" y1="0" x2="0" y2="1"><stop offset="0" stop-color="#7d7d7d"/><stop offset="1" stop-color="#4a4a4a"/></linearGradient></defs><path d="M5 3 L14 3 L11 6.2 L11 11 L8 11 L8 6.2 Z" fill="url(#fg)"/><path d="M2 9 L7 9 L4.5 12 Z" fill="#666"/></svg></div>
<div class="btn" style="left:360px;top:61px"><svg width="15" height="15" style="position:absolute;left:0;top:0"><path d="M3 9 L8 9 L5.5 12 Z" fill="#5a5a5a"/><rect x="10" y="4" width="1" height="7.6" fill="#4f4f4f"/><path d="M9 5 L10.5 3 L12 5 Z" fill="#4f4f4f"/></svg></div>
<div class="btn" style="left:464px;top:41px"><svg width="15" height="15" style="position:absolute;left:0;top:0"><path d="M4 6 L11 6 L7.5 10 Z" fill="#666"/></svg></div>
<div class="a" style="left:48px;top:38px;width:167px;height:3px;background:#1d170d"></div>
<div class="a" style="left:48px;top:38px;width:3px;height:23px;background:#1d170d"></div>
<div class="a" style="left:48px;top:58px;width:162px;height:3px;background:#1d170d"></div>
<div class="a" style="left:212px;top:38px;width:3px;height:18px;background:#1d170d"></div>
<div class="a" style="left:210px;top:56px;width:7px;height:7px;background:#e4eafa"></div>
<div class="a" style="left:211px;top:57px;width:5px;height:5px;background:#1d170d"></div>
<div class="a" style="left:885px;top:0;width:16px;height:848px;background:linear-gradient(90deg,#a1b5d2 0%,#b0c5e0 45%,#bacde7 100%)"></div>
<div class="hl" style="left:885px;top:0;width:16px;background:#98abc8"></div>
<div class="vl" style="left:885px;top:0;height:8px;background:#7b94b7"></div>
<div class="a" style="left:887px;top:1px;width:13px;height:6px;background:#fff;border:1px solid #e6edf7"></div>
<div class="hl" style="left:890px;top:3px;width:7px;background:#8ea3c3"></div>
<div class="hl" style="left:886px;top:7px;width:15px;background:#8fa5c6"></div>
<svg class="a" style="left:887px;top:13px" width="11" height="6"><path d="M0.6 5.6 L5.5 0.6 L10.4 5.6 Z" fill="#4a5576"/></svg>
<div class="a" style="left:885px;top:136px;width:15px;height:367px;border:1px solid #5b7699;border-radius:2px;background:linear-gradient(90deg,#c0d4ee 0%,#adc3e0 50%,#93abcb 100%)"></div>
<div class="hl" style="left:889px;top:316px;width:8px;background:#6e7484"></div>
<div class="hl" style="left:891px;top:317px;width:6px;background:#c7d9f1"></div>
<div class="hl" style="left:889px;top:318px;width:8px;background:#6e7484"></div>
<div class="hl" style="left:891px;top:319px;width:6px;background:#c7d9f1"></div>
<div class="hl" style="left:889px;top:320px;width:8px;background:#6e7484"></div>
<div class="hl" style="left:891px;top:321px;width:6px;background:#c7d9f1"></div>
<div class="hl" style="left:889px;top:322px;width:8px;background:#6e7484"></div>
<div class="hl" style="left:891px;top:323px;width:6px;background:#c7d9f1"></div>
<div class="a" style="left:901px;top:0;width:250px;height:848px;background:#d6e4f3"></div>
<div class="vl" style="left:901px;top:0;height:848px;background:#7889a1"></div>
<div class="a" style="left:902px;top:0;width:2px;height:848px;background:linear-gradient(90deg,#e4f0fd,#dbe8f7)"></div>
<div class="hl" style="left:902px;top:0;width:249px;background:#8d9cb0"></div>
<div class="a" style="left:902px;top:1px;width:244px;height:2px;background:#e6f1fe"></div>
<div class="a" style="left:1144px;top:1px;width:2px;height:847px;background:linear-gradient(90deg,#e4f0fe,#dce9f8)"></div>
<div class="vl" style="left:1146px;top:0;height:848px;background:#8391a8"></div>
<div class="vl" style="left:1147px;top:0;height:848px;background:#2b3535"></div>
<div class="vl" style="left:1148px;top:0;height:848px;background:#bac3be"></div>
<div class="vl" style="left:1149px;top:0;height:848px;background:#7b8884"></div>
<div class="vl" style="left:1150px;top:0;height:848px;background:#ffffff"></div>
<div class="a" style="left:904px;top:3px;width:240px;height:17px;background:#b2c5de"></div>
<div class="t pt" style="left:906px;top:3.5px;width:150px;"><span id="t184" style="letter-spacing:-0.079px;">PivotTable Field List</span></div>
<svg class="a" style="left:1112px;top:8px" width="11" height="7"><path d="M0.5 1 L10.5 1 L5.5 6.4 Z" fill="#1f3a68"/></svg>
<svg class="a" style="left:1130px;top:6px" width="10" height="10"><path d="M1.2 1.6 L8.8 9.0 M8.8 1.6 L1.2 9.0" stroke="#474c55" stroke-width="2.1" fill="none"/></svg>
<div class="t p" style="left:910.5px;top:39.5px;width:170px;"><span id="t185" style="letter-spacing:0.034px;">Choose fields to add to report:</span></div>
<div class="a" style="left:1096px;top:28px;width:41px;height:24px;border:1px solid #707070;border-radius:3px;box-shadow:inset 0 0 0 1px #fcfcfc;background:linear-gradient(#f6f6f6 0%,#ececec 46%,#dddddd 50%,#cfcfcf 100%)"></div>
<svg class="a" style="left:1099px;top:31px" width="17" height="18" shape-rendering="crispEdges"><rect x="1" y="4" width="7" height="12" fill="#fff"/><rect x="1" y="4" width="7" height="3" fill="#4079e6"/><rect x="2" y="5" width="5" height="1" fill="#8ab0f6"/><rect x="1" y="7" width="1" height="9" fill="#5f7fbd"/><rect x="7" y="7" width="1" height="9" fill="#2c4570"/><rect x="1" y="15" width="7" height="1" fill="#2c4570"/><rect x="3" y="8" width="3" height="1" fill="#8596c6"/><rect x="3" y="10" width="3" height="1" fill="#8596c6"/><rect x="3" y="12" width="3" height="1" fill="#8596c6"/><rect x="5" y="1" width="7" height="12" fill="#fff"/><rect x="5" y="1" width="7" height="3" fill="#4079e6"/><rect x="6" y="2" width="5" height="1" fill="#8ab0f6"/><rect x="5" y="4" width="1" height="9" fill="#5f7fbd"/><rect x="11" y="4" width="1" height="9" fill="#2c4570"/><rect x="5" y="12" width="7" height="1" fill="#2c4570"/><rect x="7" y="5" width="3" height="1" fill="#8596c6"/><rect x="7" y="7" width="3" height="1" fill="#8596c6"/><rect x="7" y="9" width="3" height="1" fill="#8596c6"/><rect x="9" y="5" width="7" height="12" fill="#fff"/><rect x="9" y="5" width="7" height="3" fill="#4079e6"/><rect x="10" y="6" width="5" height="1" fill="#8ab0f6"/><rect x="9" y="8" width="1" height="9" fill="#5f7fbd"/><rect x="15" y="8" width="1" height="9" fill="#2c4570"/><rect x="9" y="16" width="7" height="1" fill="#2c4570"/><rect x="11" y="9" width="3" height="1" fill="#8596c6"/><rect x="11" y="11" width="3" height="1" fill="#8596c6"/><rect x="11" y="13" width="3" height="1" fill="#8596c6"/></svg>
<svg class="a" style="left:1122px;top:37px" width="9" height="6"><path d="M0.7 0.9 L8.3 0.9 L4.5 5.2 Z" fill="#000"/></svg>
<div class="box" style="left:910px;top:60px;width:228px;height:399px"></div>
<div class="chk" style="left:913px;top:63px"><b></b><svg width="11" height="11" style="position:absolute;left:0;top:0"><path d="M2.3 5.7 L4.7 8.9 L9.0 1.5" stroke="#4458a0" stroke-width="2" fill="none" stroke-linejoin="miter"/></svg></div>
<div class="t pb" style="left:927.5px;top:61.5px;width:150px;"><span id="t186" style="letter-spacing:0.089px;">Sales Rep</span></div>
<div class="chk" style="left:913px;top:81px"><b></b></div>
<div class="t p" style="left:927.5px;top:79.5px;width:150px;"><span id="t187" style="letter-spacing:-0.120px;">Client</span></div>
<div class="chk" style="left:913px;top:99px"><b></b></div>
<div class="t p" style="left:927.5px;top:97.5px;width:150px;"><span id="t188" style="letter-spacing:0.253px;">Outlet</span></div>
<div class="chk" style="left:913px;top:117px"><b></b></div>
<div class="t p" style="left:927.5px;top:115.5px;width:150px;"><span id="t189" style="letter-spacing:-0.059px;">Order Date</span></div>
<div class="chk" style="left:913px;top:135px"><b></b><svg width="11" height="11" style="position:absolute;left:0;top:0"><path d="M2.3 5.7 L4.7 8.9 L9.0 1.5" stroke="#4458a0" stroke-width="2" fill="none" stroke-linejoin="miter"/></svg></div>
<div class="t pb" style="left:927.5px;top:133.5px;width:150px;"><span id="t190" style="letter-spacing:0.267px;">Order Month</span></div>
<div class="chk" style="left:913px;top:153px"><b></b></div>
<div class="t p" style="left:927.5px;top:151.5px;width:150px;"><span id="t191" style="letter-spacing:-0.109px;">Currency</span></div>
<div class="chk" style="left:913px;top:171px"><b></b></div>
<div class="t p" style="left:927.5px;top:169.5px;width:150px;"><span id="t192" style="letter-spacing:0.019px;">Total (in Currency)</span></div>
<div class="chk" style="left:913px;top:189px"><b></b><svg width="11" height="11" style="position:absolute;left:0;top:0"><path d="M2.3 5.7 L4.7 8.9 L9.0 1.5" stroke="#4458a0" stroke-width="2" fill="none" stroke-linejoin="miter"/></svg></div>
<div class="t pb" style="left:927.5px;top:187.5px;width:150px;"><span id="t193" style="letter-spacing:0.726px;">Total</span></div>
<div class="chk" style="left:913px;top:207px"><b></b><svg width="11" height="11" style="position:absolute;left:0;top:0"><path d="M2.3 5.7 L4.7 8.9 L9.0 1.5" stroke="#4458a0" stroke-width="2" fill="none" stroke-linejoin="miter"/></svg></div>
<div class="t pb" style="left:927.5px;top:205.5px;width:150px;"><span id="t194" style="letter-spacing:0.107px;">Lead Source</span></div>
<svg class="a" style="left:1120px;top:63px" width="16" height="13"><defs><linearGradient id="f1" x1="0" y1="0" x2="1" y2="0.25"><stop offset="0" stop-color="#bdbdbd"/><stop offset="0.36" stop-color="#ffffff"/><stop offset="0.58" stop-color="#d2d2d2"/><stop offset="0.8" stop-color="#6a6a6a"/><stop offset="1" stop-color="#2a2a2a"/></linearGradient></defs><path d="M0.9 1.1 L15.1 1.1 L10 6.6 L10 12 L6 12 L6 6.6 Z" fill="url(#f1)"/><path d="M1.2 1.4 L6.3 6.8 L6.3 11.8" stroke="#7e7e7e" stroke-width="0.9" fill="none"/><path d="M1 1.4 L15 1.4" stroke="#777" stroke-width="0.8"/><path d="M14.6 1.5 L9.6 6.8 L9.6 11.6 L6.2 11.6" stroke="#1e1e1e" stroke-width="1.2" fill="none"/></svg>
<div class="hl" style="left:904px;top:466px;width:240px;background:#e4effc"></div>
<div class="hl" style="left:904px;top:467px;width:240px;background:#f3f8ff"></div>
<div class="hl" style="left:904px;top:468px;width:240px;background:#e6f0fd"></div>
<div class="hl" style="left:904px;top:469px;width:240px;background:#bfd6f7"></div>
<div class="hl" style="left:904px;top:470px;width:240px;background:#b3cef5"></div>
<div class="t p" style="left:910.5px;top:478px;width:200px;"><span id="t195" style="letter-spacing:-0.041px;">Drag fields between areas below:</span></div>
<svg class="a" style="left:910px;top:495px" width="16" height="13"><defs><linearGradient id="f2" x1="0" y1="0" x2="1" y2="0.25"><stop offset="0" stop-color="#bdbdbd"/><stop offset="0.36" stop-color="#ffffff"/><stop offset="0.58" stop-color="#d2d2d2"/><stop offset="0.8" stop-color="#6a6a6a"/><stop offset="1" stop-color="#2a2a2a"/></linearGradient></defs><path d="M0.9 1.1 L15.1 1.1 L10 6.6 L10 12 L6 12 L6 6.6 Z" fill="url(#f2)"/><path d="M1.2 1.4 L6.3 6.8 L6.3 11.8" stroke="#7e7e7e" stroke-width="0.9" fill="none"/><path d="M1 1.4 L15 1.4" stroke="#777" stroke-width="0.8"/><path d="M14.6 1.5 L9.6 6.8 L9.6 11.6 L6.2 11.6" stroke="#1e1e1e" stroke-width="1.2" fill="none"/></svg>
<div class="t p" style="left:935px;top:495px;width:100px;"><span id="t196" style="letter-spacing:0.024px;">Report Filter</span></div>
<svg class="a" style="left:1029px;top:495px" width="16" height="13" shape-rendering="crispEdges"><rect x="0" y="0" width="16" height="13" fill="#a6b0cf"/><rect x="1" y="1" width="14" height="11" fill="#a9b3d3"/><rect x="0" y="0" width="1" height="13" fill="#b4bdd8"/><rect x="0" y="0" width="16" height="4" fill="#9d8b5e"/><rect x="0" y="0" width="16" height="1" fill="#a8966a"/><rect x="15" y="4" width="1" height="9" fill="#30466f"/><rect x="0" y="12" width="16" height="1" fill="#2d4469"/><rect x="1" y="1" width="2" height="2" fill="#f6c548"/><rect x="1" y="1" width="1" height="1" fill="#ffeb9c"/><rect x="2" y="1" width="1" height="1" fill="#fcd968"/><rect x="1" y="4" width="2" height="2" fill="#ffffff"/><rect x="2" y="5" width="1" height="1" fill="#d3e1fa"/><rect x="1" y="7" width="2" height="2" fill="#ffffff"/><rect x="2" y="8" width="1" height="1" fill="#d3e1fa"/><rect x="1" y="10" width="2" height="2" fill="#ffffff"/><rect x="2" y="11" width="1" height="1" fill="#d3e1fa"/><rect x="4" y="1" width="2" height="2" fill="#f6c548"/><rect x="4" y="1" width="1" height="1" fill="#ffeb9c"/><rect x="5" y="1" width="1" height="1" fill="#fcd968"/><rect x="4" y="4" width="2" height="2" fill="#ffffff"/><rect x="5" y="5" width="1" height="1" fill="#d3e1fa"/><rect x="4" y="7" width="2" height="2" fill="#ffffff"/><rect x="5" y="8" width="1" height="1" fill="#d3e1fa"/><rect x="4" y="10" width="2" height="2" fill="#ffffff"/><rect x="5" y="11" width="1" height="1" fill="#d3e1fa"/><rect x="7" y="1" width="2" height="2" fill="#f6c548"/><rect x="7" y="1" width="1" height="1" fill="#ffeb9c"/><rect x="8" y="1" width="1" height="1" fill="#fcd968"/><rect x="7" y="4" width="2" height="2" fill="#ffffff"/><rect x="8" y="5" width="1" height="1" fill="#d3e1fa"/><rect x="7" y="7" width="2" height="2" fill="#ffffff"/><rect x="8" y="8" width="1" height="1" fill="#d3e1fa"/><rect x="7" y="10" width="2" height="2" fill="#ffffff"/><rect x="8" y="11" width="1" height="1" fill="#d3e1fa"/><rect x="10" y="1" width="2" height="2" fill="#f6c548"/><rect x="10" y="1" width="1" height="1" fill="#ffeb9c"/><rect x="11" y="1" width="1" height="1" fill="#fcd968"/><rect x="10" y="4" width="2" height="2" fill="#ffffff"/><rect x="11" y="5" width="1" height="1" fill="#d3e1fa"/><rect x="10" y="7" width="2" height="2" fill="#ffffff"/><rect x="11" y="8" width="1" height="1" fill="#d3e1fa"/><rect x="10" y="10" width="2" height="2" fill="#ffffff"/><rect x="11" y="11" width="1" height="1" fill="#d3e1fa"/><rect x="13" y="1" width="2" height="2" fill="#f6c548"/><rect x="13" y="1" width="1" height="1" fill="#ffeb9c"/><rect x="14" y="1" width="1" height="1" fill="#fcd968"/><rect x="13" y="4" width="2" height="2" fill="#ffffff"/><rect x="14" y="5" width="1" height="1" fill="#d3e1fa"/><rect x="13" y="7" width="2" height="2" fill="#ffffff"/><rect x="14" y="8" width="1" height="1" fill="#d3e1fa"/><rect x="13" y="10" width="2" height="2" fill="#ffffff"/><rect x="14" y="11" width="1" height="1" fill="#d3e1fa"/></svg>
<div class="t p" style="left:1054.5px;top:495px;width:100px;"><span id="t197" style="letter-spacing:-0.430px;">Column Labels</span></div>
<div class="box" style="left:910px;top:513px;width:110px;height:167px"></div>
<div class="box" style="left:1029px;top:513px;width:110px;height:167px"></div>
<div class="item" style="left:1031px;top:515px;width:106px"><svg style="position:absolute;right:8px;top:5px" width="9" height="5"><path d="M1 0.3 L8.1 0.3 L4.55 4.2 Z" fill="#000"/></svg></div>
<div class="t p" style="left:1037px;top:516.5px;width:90px;"><span id="t198" style="letter-spacing:0.012px;">Order Month</span></div>
<svg class="a" style="left:910px;top:684px" width="16" height="13" shape-rendering="crispEdges"><rect x="0" y="0" width="16" height="13" fill="#a6b0cf"/><rect x="1" y="1" width="14" height="11" fill="#a9b3d3"/><rect x="0" y="0" width="1" height="13" fill="#b4bdd8"/><rect x="0" y="0" width="4" height="13" fill="#a39063"/><rect x="0" y="0" width="1" height="13" fill="#b3a27a"/><rect x="15" y="0" width="1" height="13" fill="#30466f"/><rect x="4" y="12" width="12" height="1" fill="#2d4469"/><rect x="1" y="1" width="2" height="2" fill="#f6c548"/><rect x="1" y="1" width="1" height="1" fill="#ffeb9c"/><rect x="2" y="1" width="1" height="1" fill="#fcd968"/><rect x="1" y="4" width="2" height="2" fill="#f6c548"/><rect x="1" y="4" width="1" height="1" fill="#ffeb9c"/><rect x="2" y="4" width="1" height="1" fill="#fcd968"/><rect x="1" y="7" width="2" height="2" fill="#f6c548"/><rect x="1" y="7" width="1" height="1" fill="#ffeb9c"/><rect x="2" y="7" width="1" height="1" fill="#fcd968"/><rect x="1" y="10" width="2" height="2" fill="#f6c548"/><rect x="1" y="10" width="1" height="1" fill="#ffeb9c"/><rect x="2" y="10" width="1" height="1" fill="#fcd968"/><rect x="4" y="1" width="2" height="2" fill="#ffffff"/><rect x="5" y="2" width="1" height="1" fill="#d3e1fa"/><rect x="4" y="4" width="2" height="2" fill="#ffffff"/><rect x="5" y="5" width="1" height="1" fill="#d3e1fa"/><rect x="4" y="7" width="2" height="2" fill="#ffffff"/><rect x="5" y="8" width="1" height="1" fill="#d3e1fa"/><rect x="4" y="10" width="2" height="2" fill="#ffffff"/><rect x="5" y="11" width="1" height="1" fill="#d3e1fa"/><rect x="7" y="1" width="2" height="2" fill="#ffffff"/><rect x="8" y="2" width="1" height="1" fill="#d3e1fa"/><rect x="7" y="4" width="2" height="2" fill="#ffffff"/><rect x="8" y="5" width="1" height="1" fill="#d3e1fa"/><rect x="7" y="7" width="2" height="2" fill="#ffffff"/><rect x="8" y="8" width="1" height="1" fill="#d3e1fa"/><rect x="7" y="10" width="2" height="2" fill="#ffffff"/><rect x="8" y="11" width="1" height="1" fill="#d3e1fa"/><rect x="10" y="1" width="2" height="2" fill="#ffffff"/><rect x="11" y="2" width="1" height="1" fill="#d3e1fa"/><rect x="10" y="4" width="2" height="2" fill="#ffffff"/><rect x="11" y="5" width="1" height="1" fill="#d3e1fa"/><rect x="10" y="7" width="2" height="2" fill="#ffffff"/><rect x="11" y="8" width="1" height="1" fill="#d3e1fa"/><rect x="10" y="10" width="2" height="2" fill="#ffffff"/><rect x="11" y="11" width="1" height="1" fill="#d3e1fa"/><rect x="13" y="1" width="2" height="2" fill="#ffffff"/><rect x="14" y="2" width="1" height="1" fill="#d3e1fa"/><rect x="13" y="4" width="2" height="2" fill="#ffffff"/><rect x="14" y="5" width="1" height="1" fill="#d3e1fa"/><rect x="13" y="7" width="2" height="2" fill="#ffffff"/><rect x="14" y="8" width="1" height="1" fill="#d3e1fa"/><rect x="13" y="10" width="2" height="2" fill="#ffffff"/><rect x="14" y="11" width="1" height="1" fill="#d3e1fa"/></svg>
<div class="t p" style="left:935px;top:684px;width:100px;"><span id="t199" style="letter-spacing:-0.213px;">Row Labels</span></div>
<svg class="a" style="left:1031px;top:685px" width="12" height="12"><path d="M1 1 H10 V3.5 H9.3 L8.7 2.4 H3.7 L6.9 5.4 L3.3 8.5 H8.9 L9.5 7.2 H10.2 V10.1 H1 V9.3 L4.8 5.5 L1 1.8 Z" fill="#000"/></svg>
<div class="t p" style="left:1054.5px;top:684px;width:100px;"><span id="t200" style="letter-spacing:-0.363px;">Values</span></div>
<div class="box" style="left:910px;top:702px;width:110px;height:160px"></div>
<div class="box" style="left:1029px;top:702px;width:110px;height:160px"></div>
<div class="item" style="left:912px;top:704px;width:106px"><svg style="position:absolute;right:8px;top:5px" width="9" height="5"><path d="M1 0.3 L8.1 0.3 L4.55 4.2 Z" fill="#000"/></svg></div>
<div class="t p" style="left:918px;top:705.5px;width:90px;"><span id="t201" style="letter-spacing:-0.423px;">Sales Rep</span></div>
<div class="item" style="left:912px;top:722px;width:106px"><svg style="position:absolute;right:8px;top:5px" width="9" height="5"><path d="M1 0.3 L8.1 0.3 L4.55 4.2 Z" fill="#000"/></svg></div>
<div class="t p" style="left:918px;top:723.5px;width:90px;"><span id="t202" style="letter-spacing:-0.270px;">Lead Source</span></div>
<div class="item" style="left:1031px;top:704px;width:106px"><svg style="position:absolute;right:8px;top:5px" width="9" height="5"><path d="M1 0.3 L8.1 0.3 L4.55 4.2 Z" fill="#000"/></svg></div>
<div class="t p" style="left:1037px;top:705.5px;width:90px;"><span id="t203" style="letter-spacing:0.023px;">Sum of Total</span></div>
</body></html>
